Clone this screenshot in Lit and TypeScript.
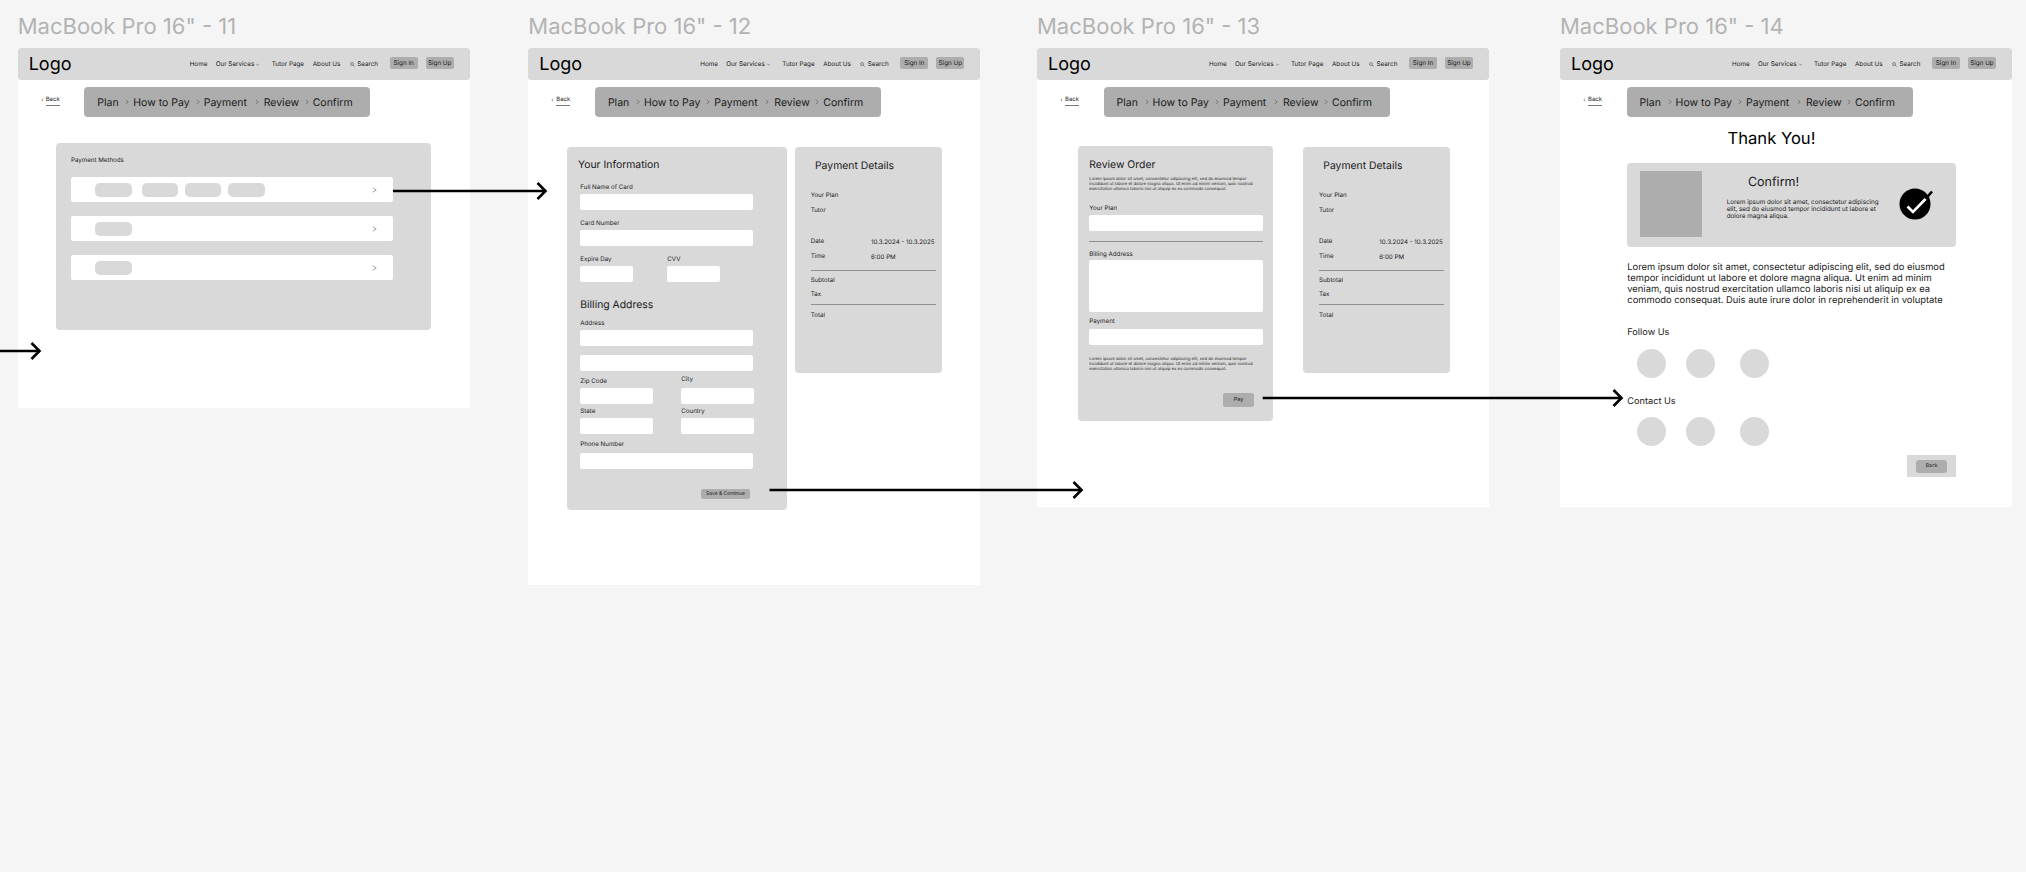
import { LitElement, html, css, svg } from "lit";
import { customElement } from "lit/decorators.js";

const LOREM_SMALL = html`Lorem ipsum dolor sit amet, consectetur adipiscing elit, sed do eiusmod tempor<br />incididunt ut labore et dolore magna aliqua. Ut enim ad minim veniam, quis nostrud<br />exercitation ullamco laboris nisi ut aliquip ex ea commodo consequat.`;

@customElement("app-root")
export class AppRoot extends LitElement {
  static styles = css`
    :host {
      display: block;
      position: relative;
      width: 2026px;
      height: 872px;
      overflow: hidden;
      background: #f5f5f5;
      font-family: Inter, "Liberation Sans", sans-serif;
      color: #1a1a1a;
      text-rendering: geometricPrecision;
    }
    .artboard { position: absolute; top: 16px; }
    .a1 { left: 17.7px; }
    .a2 { left: 528.3px; }
    .a3 { left: 1037px; }
    .a4 { left: 1560px; }
    .name {
      height: 32px;
      line-height: 22px;
      font-size: 22px;
      color: #b3b3b3;
      white-space: nowrap;
    }
    .frame { width: 452px; background: #fff; }
    .h1 { height: 360px; }
    .h2 { height: 537px; }
    .h3 { height: 459px; }

    .header {
      display: grid;
      grid-template-columns: 161px 26px 56px 41px 37px 40px 28px 8px 28px;
      align-items: center;
      height: 32px;
      padding-left: 11px;
      background: #d9d9d9;
      border-radius: 3px;
      font-size: 6.3px;
      white-space: nowrap;
    }
    .logo { font-size: 18px; color: #000; }
    .services, .search { display: flex; align-items: center; gap: 2px; }
    .search svg { margin-right: 0.5px; }
    .pill-btn {
      display: flex;
      align-items: center;
      justify-content: center;
      height: 12px;
      margin-top: -2px;
      background: #adadad;
      border-radius: 2px;
      font-size: 6.3px;
    }

    .subnav { display: flex; height: 30px; margin-top: 7px; }
    .back {
      display: flex;
      align-items: flex-start;
      width: 66.6px;
      padding: 9px 0 0 23px;
      box-sizing: border-box;
      font-size: 6px;
      gap: 2px;
    }
    .back svg { margin-top: 2px; }
    .back span { border-bottom: 1px solid #777; line-height: 8px; height: 9px; }
    .stepper {
      display: grid;
      grid-template-columns: 28px 8px 62.4px 8px 51px 9px 41px 8px auto;
      align-items: center;
      width: 286px;
      height: 29.5px;
      padding: 1px 0 0 13px;
      box-sizing: border-box;
      background: #adadad;
      border-radius: 4px;
      font-size: 10.5px;
      white-space: nowrap;
    }

    .card { background: #d9d9d9; border-radius: 4px; box-sizing: border-box; }
    .label { height: 8px; line-height: 10px; font-size: 6.2px; white-space: nowrap; }
    .input { height: 16px; background: #fff; border-radius: 2px; }
    .heading { height: 14px; line-height: 15.5px; font-size: 10.4px; white-space: nowrap; }
    .hr { height: 1px; background: #8f8f8f; }
    .action {
      display: flex;
      align-items: center;
      justify-content: center;
      align-self: flex-end;
      background: #adadad;
      border-radius: 2px;
      font-size: 5px;
      white-space: nowrap;
    }
    .tiny { font-size: 4.2px; line-height: 5px; white-space: nowrap; height: 15px; }

    /* Frame 11 */
    .methods {
      width: 375px;
      height: 187px;
      margin: 26px 0 0 38.3px;
      padding: 13px 38px 0 15px;
    }
    .methods .label { margin-bottom: 13px; }
    .method {
      display: flex;
      align-items: center;
      height: 25px;
      margin-bottom: 14px;
      padding-left: 24.5px;
      background: #fff;
      border-radius: 2px;
    }
    .chip { width: 36.4px; height: 14px; border-radius: 5px; background: #d9d9d9; margin-right: 7px; }
    .chip:first-child { margin-right: 9.7px; }
    .method svg { margin-left: auto; margin-right: 16px; }

    /* Frames 12 and 13 */
    .cols { display: flex; align-items: flex-start; margin-top: 30px; }
    .info {
      display: flex;
      flex-direction: column;
      width: 220.8px;
      height: 363px;
      margin-left: 38.4px;
      padding: 10px 34px 0 13.6px;
    }
    .info .heading { margin-left: -2.3px; }
    .info .heading.flush { margin-left: 0; }
    .field { display: flex; flex-direction: column; gap: 3px; }
    .pair { display: grid; grid-template-columns: 52.7px 53px; column-gap: 34.3px; }
    .pair2 { display: grid; grid-template-columns: 73px 73px; column-gap: 28px; }
    .raised { margin-top: -1.6px; }
    .raised .label { margin-bottom: 1.6px; }
    .details {
      display: flex;
      flex-direction: column;
      width: 146.7px;
      height: 226px;
      margin-left: 7.5px;
      padding: 11px 5.7px 0 15.7px;
    }
    .details .heading { margin-left: 4.3px; }
    .line { display: grid; grid-template-columns: 60.3px auto; }
    .value { margin-top: 1px; }
    .review {
      display: flex;
      flex-direction: column;
      width: 194.7px;
      height: 274.7px;
      margin: -0.7px 0 0 41.3px;
      padding: 10.2px 10.3px 0 11px;
    }
    .area { height: 52px; }
    .review + .details { margin-left: 30.3px; margin-top: 0; }

    /* Frame 14 */
    .thanks { margin-left: 67.3px; width: 328.7px; }
    .thanks h1 {
      margin: 10.5px 0 0 100.2px;
      font-size: 16.6px;
      line-height: 22px;
      font-weight: 400;
      color: #000;
      white-space: nowrap;
    }
    .confirm {
      display: flex;
      align-items: flex-start;
      height: 84.2px;
      margin-top: 13.8px;
      padding: 7.7px 0 0 13px;
    }
    .photo { width: 61.7px; height: 66px; background: #adadad; flex: none; }
    .confirm-text { width: 172px; margin-left: 24.7px; padding-top: 4.3px; flex: none; }
    .confirm-text h2 {
      margin: 0 0 0 21.3px;
      font-size: 12.5px;
      line-height: 16px;
      font-weight: 400;
      white-space: nowrap;
    }
    .confirm-text p { margin: 8px 0 0; font-size: 6.3px; line-height: 7px; white-space: nowrap; }
    .check { margin: 15px 0 0 0; flex: none; }
    .para { margin: 14.4px 0 0; font-size: 9.37px; line-height: 11.2px; white-space: nowrap; }
    .social-title { height: 10px; line-height: 12px; font-size: 9.2px; white-space: nowrap; }
    .dots { display: flex; margin-left: 9.9px; }
    .dot { width: 29px; height: 29px; border-radius: 50%; background: #d9d9d9; }
    .dot + .dot { margin-left: 20px; }
    .dot:last-child { margin-left: 24.6px; }
    .back-box {
      display: flex;
      align-items: center;
      justify-content: center;
      width: 48.7px;
      height: 22px;
      margin: 9.8px 0 0 auto;
      background: #d9d9d9;
    }
    .back-box .action { width: 31px; height: 13.5px; align-self: center; border-radius: 3px; }

    .mt2h { margin-top: 2.5px; }
    .mt3 { margin-top: 3px; }
    .mt4h { margin-top: 4.5px; }
    .mt5 { margin-top: 5px; }
    .mt5h { margin-top: 5.5px; }
    .mt6 { margin-top: 6px; }
    .mt6h { margin-top: 6.5px; }
    .mt7 { margin-top: 7px; }
    .mt7h { margin-top: 7.5px; }
    .mt8 { margin-top: 8px; }
    .mt8h { margin-top: 8.5px; }
    .mt9 { margin-top: 9px; }
    .mt10 { margin-top: 10px; }
    .mt10h { margin-top: 10.5px; }
    .mt12 { margin-top: 12px; }
    .mt15 { margin-top: 15px; }
    .mt18 { margin-top: 18px; }
    .mt18h { margin-top: 18.5px; }
    .mt20 { margin-top: 20px; }
    .mt20h { margin-top: 20.5px; }
    .mt21 { margin-top: 21px; }
    .mt23h { margin-top: 23.5px; }
    .gap5 { gap: 5px; }

    .save { width: 49.5px; height: 10px; margin-right: 3.3px; }
    .pay { width: 31px; height: 13.5px; margin-right: 8.7px; font-size: 5.5px; }

    .arrows { position: absolute; inset: 0; pointer-events: none; }
  `;

  private chev(color = "#555") {
    return html`<svg width="4" height="6" viewBox="0 0 4 6" fill="none"><path d="M.8.9 3.2 3 .8 5.1" stroke=${color} stroke-width=".6"/></svg>`;
  }

  private nav() {
    return html`
      <div class="header">
        <div class="logo">Logo</div>
        <div>Home</div>
        <div class="services">Our Services
          <svg width="3" height="3" viewBox="0 0 3 3" fill="none"><path d="M.3 1 1.5 2.2 2.7 1" stroke="#333" stroke-width=".5"/></svg>
        </div>
        <div>Tutor Page</div>
        <div>About Us</div>
        <div class="search">
          <svg width="5" height="5" viewBox="0 0 5 5" fill="none"><circle cx="2" cy="2" r="1.5" stroke="#333" stroke-width=".5"/><path d="M3.1 3.1 4.6 4.6" stroke="#333" stroke-width=".5"/></svg>
          Search
        </div>
        <div class="pill-btn">Sign In</div>
        <div></div>
        <div class="pill-btn">Sign Up</div>
      </div>
      <div class="subnav">
        <div class="back">
          <svg width="3" height="4" viewBox="0 0 3 4" fill="none"><path d="M2.2.7.8 2 2.2 3.3" stroke="#333" stroke-width=".5"/></svg>
          <span>Back</span>
        </div>
        <div class="stepper">
          <div>Plan</div>${this.chev()}
          <div>How to Pay</div>${this.chev()}
          <div>Payment</div>${this.chev()}
          <div>Review</div>${this.chev()}
          <div>Confirm</div>
        </div>
      </div>
    `;
  }

  private field(label: string, extra = "") {
    return html`<div class="field ${extra}"><div class="label">${label}</div><div class="input"></div></div>`;
  }

  private details() {
    return html`
      <div class="card details">
        <div class="heading">Payment Details</div>
        <div class="label mt18h">Your Plan</div>
        <div class="label mt7">Tutor</div>
        <div class="label line mt23h"><span>Date</span><span class="value">10.3.2024 - 10.3.2025</span></div>
        <div class="label line mt6h"><span>Time</span><span class="value">6:00 PM</span></div>
        <div class="hr mt10h"></div>
        <div class="label mt5">Subtotal</div>
        <div class="label mt5h">Tax</div>
        <div class="hr mt6h"></div>
        <div class="label mt6">Total</div>
      </div>
    `;
  }

  private frame11() {
    const rows = [4, 1, 1];
    return html`
      <div class="artboard a1">
        <div class="name">MacBook Pro 16" - 11</div>
        <div class="frame h1">
          ${this.nav()}
          <div class="card methods">
            <div class="label">Payment Methods</div>
            ${rows.map(
              (n) => html`<div class="method">
                ${Array.from({ length: n }, () => html`<div class="chip"></div>`)}
                <svg width="5" height="6" viewBox="0 0 5 6" fill="none"><path d="M.8.8 4.2 3 .8 5.2" stroke="#666" stroke-width=".6"/></svg>
              </div>`
            )}
          </div>
        </div>
      </div>
    `;
  }

  private frame12() {
    return html`
      <div class="artboard a2">
        <div class="name">MacBook Pro 16" - 12</div>
        <div class="frame h2">
          ${this.nav()}
          <div class="cols">
            <div class="card info">
              <div class="heading">Your Information</div>
              ${this.field("Full Name of Card", "mt12")}
              ${this.field("Card Number", "mt8h")}
              <div class="pair mt9">
                ${this.field("Expire Day")}
                ${this.field("CVV")}
              </div>
              <div class="heading flush mt15">Billing Address</div>
              ${this.field("Address", "mt8")}
              <div class="input mt9"></div>
              <div class="pair2 mt6">
                ${this.field("Zip Code")}
                ${this.field("City", "raised")}
              </div>
              <div class="pair2 mt3">
                ${this.field("State")}
                ${this.field("Country")}
              </div>
              <div class="field mt6 gap5">
                <div class="label">Phone Number</div>
                <div class="input"></div>
              </div>
              <div class="action save mt20">Save &amp; Continue</div>
            </div>
            ${this.details()}
          </div>
        </div>
      </div>
    `;
  }

  private frame13() {
    return html`
      <div class="artboard a3">
        <div class="name">MacBook Pro 16" - 13</div>
        <div class="frame h3">
          ${this.nav()}
          <div class="cols">
            <div class="card review">
              <div class="heading">Review Order</div>
              <div class="tiny mt6h">${LOREM_SMALL}</div>
              ${this.field("Your Plan", "mt12")}
              <div class="hr mt10"></div>
              <div class="label mt7h">Billing Address</div>
              <div class="input area mt2h"></div>
              <div class="label mt4h">Payment</div>
              <div class="input mt4h"></div>
              <div class="tiny mt12">${LOREM_SMALL}</div>
              <div class="action pay mt21">Pay</div>
            </div>
            ${this.details()}
          </div>
        </div>
      </div>
    `;
  }

  private frame14() {
    return html`
      <div class="artboard a4">
        <div class="name">MacBook Pro 16" - 14</div>
        <div class="frame h3">
          ${this.nav()}
          <div class="thanks">
            <h1>Thank You!</h1>
            <div class="card confirm">
              <div class="photo"></div>
              <div class="confirm-text">
                <h2>Confirm!</h2>
                <p>Lorem ipsum dolor sit amet, consectetur adipiscing<br />elit, sed do eiusmod tempor incididunt ut labore et<br />dolore magna aliqua.</p>
              </div>
              <svg class="check" width="34" height="34" viewBox="0 0 34 34" fill="none">
                <circle cx="16" cy="18" r="15.5" fill="#000"/>
                <path d="M8.5 20.5 14 26 27 12.5" stroke="#fff" stroke-width="2.6"/>
                <path d="M26.5 13 33 5.5" stroke="#000" stroke-width="2.6"/>
              </svg>
            </div>
            <p class="para">Lorem ipsum dolor sit amet, consectetur adipiscing elit, sed do eiusmod<br />tempor incididunt ut labore et dolore magna aliqua. Ut enim ad minim<br />veniam, quis nostrud exercitation ullamco laboris nisi ut aliquip ex ea<br />commodo consequat. Duis aute irure dolor in reprehenderit in voluptate</p>
            <div class="social-title mt20h">Follow Us</div>
            <div class="dots mt12"><div class="dot"></div><div class="dot"></div><div class="dot"></div></div>
            <div class="social-title mt18">Contact Us</div>
            <div class="dots mt10h"><div class="dot"></div><div class="dot"></div><div class="dot"></div></div>
            <div class="back-box"><div class="action">Back</div></div>
          </div>
        </div>
      </div>
    `;
  }

  private arrow(x1: number, x2: number, y: number) {
    return svg`
      <path d="M${x1} ${y}H${x2 - 1}" stroke="#000" stroke-width="2.4"/>
      <path d="M${x2 - 9.5} ${y - 8}L${x2 - 1.5} ${y}L${x2 - 9.5} ${y + 8}" stroke="#000" stroke-width="2.6" fill="none"/>
    `;
  }

  render() {
    return html`
      ${this.frame11()} ${this.frame12()} ${this.frame13()} ${this.frame14()}
      <svg class="arrows" width="2026" height="872" viewBox="0 0 2026 872">
        ${this.arrow(0, 41, 351)}
        ${this.arrow(393, 547, 191)}
        ${this.arrow(769.5, 1083, 490)}
        ${this.arrow(1262.7, 1623, 398)}
      </svg>
    `;
  }
}
